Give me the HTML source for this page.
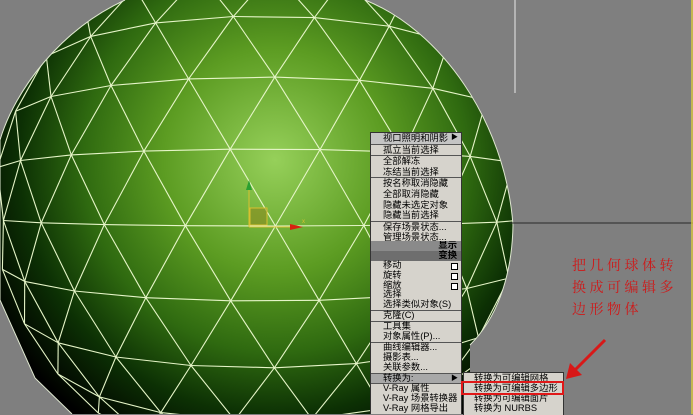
<!DOCTYPE html>
<html><head><meta charset="utf-8"><style>
html,body{margin:0;padding:0;}
body{width:693px;height:414px;overflow:hidden;background:#7f7f7f;position:relative;font-family:"Liberation Sans","Noto Sans CJK SC",sans-serif;}
svg{position:absolute;left:0;top:0;}
.m{position:absolute;background:#d6d3cc;font-size:9.3px;color:#000;overflow:hidden;}
.m div{padding-left:12px;height:10.6px;line-height:10.6px;white-space:nowrap;position:relative;}
.m2 div{height:9.9px;line-height:9.9px;}
.m3 div{height:10px;line-height:10px;padding-left:10px;}
.sep{border-top:1px solid #555;}
.hd{background:#8a8a8a;text-align:right;padding-right:4px;font-weight:bold;}
.hd2{background:#6e6e6e;text-align:right;padding-right:4px;font-weight:bold;color:#000}
.arr{position:absolute;right:3px;top:0;font-size:7px;}
.cb{position:absolute;right:3px;top:2px;width:5px;height:5px;border:1px solid #000;background:#fff;}
.red{position:absolute;left:572px;top:256px;color:#d01818;font-size:14px;line-height:22px;letter-spacing:3.5px;font-family:"Liberation Serif","Noto Serif CJK SC",serif;}
</style></head><body>
<svg width="693" height="414" id="s">
<defs>
<radialGradient id="g" gradientUnits="userSpaceOnUse" cx="275" cy="160" r="320">
<stop offset="0" stop-color="#96d05a"/>
<stop offset="0.35" stop-color="#5c9c22"/>
<stop offset="0.6" stop-color="#2f6a10"/>
<stop offset="0.8" stop-color="#0c3004"/>
<stop offset="1" stop-color="#000"/>
</radialGradient>
<clipPath id="c"><path d="M125,0 C60,30 15,90 0,140 L0,300 L35,378 L72,414 L470,414 L470,345 C495,320 512,280 513,225 C505,120 440,30 365,0 Z"/></clipPath>
</defs>
<path d="M125,0 C60,30 15,90 0,140 L0,300 L35,378 L72,414 L470,414 L470,345 C495,320 512,280 513,225 C505,120 440,30 365,0 Z" fill="url(#g)"/>
<g id="mesh" clip-path="url(#c)" stroke="#e6f5c8" stroke-width="1.1" fill="none"></g>
<path d="M125,0 C60,30 15,90 0,140 L0,300 L35,378 L72,414 M470,345 C495,320 512,280 513,225 C505,120 440,30 365,0" stroke="#dfe8d0" stroke-width="1" fill="none"/>
<line x1="515" y1="0" x2="515" y2="93" stroke="#e8e8e8" stroke-width="1"/>
<line x1="510" y1="223" x2="693" y2="223" stroke="#2a2a2a" stroke-width="1"/>
<line x1="692" y1="0" x2="692" y2="414" stroke="#d8c840" stroke-width="1.5"/>
<rect x="250" y="208" width="17" height="17" fill="#8a8a20" fill-opacity="0.6" stroke="#d8c030" stroke-width="1"/>
<line x1="249" y1="183" x2="249" y2="227" stroke="#d8c030"/>
<line x1="249" y1="227" x2="300" y2="227" stroke="#d8c030"/>
<polygon points="246,190 249,180 252,190" fill="#2aa030"/>
<polygon points="290,224 303,227 290,230" fill="#d82010"/>
<text x="302" y="223" font-size="6" fill="#d8c030">x</text>
<line x1="605" y1="340" x2="573" y2="372" stroke="#d81818" stroke-width="3"/>
<polygon points="566,379 570,363 582,375" fill="#d81818"/>
</svg>
<div class="m" style="left:370px;top:132px;width:90px;height:108px;border:1px solid #333;">
<div style="background:#c4c4c4">视口照明和阴影<span class="arr">▶</span></div>
<div class="sep">孤立当前选择</div>
<div class="sep">全部解冻</div>
<div>冻结当前选择</div>
<div class="sep">按名称取消隐藏</div>
<div>全部取消隐藏</div>
<div>隐藏未选定对象</div>
<div>隐藏当前选择</div>
<div class="sep">保存场景状态...</div>
<div>管理场景状态...</div>
</div>
<div class="m m2" style="left:370px;top:241px;width:90px;height:173px;border-left:1px solid #333;border-right:1px solid #333;">
<div class="hd">显示</div>
<div class="hd2">变换</div>
<div>移动<span class="cb"></span></div>
<div>旋转<span class="cb"></span></div>
<div>缩放<span class="cb"></span></div>
<div>选择</div>
<div>选择类似对象(S)</div>
<div class="sep">克隆(C)</div>
<div class="sep">工具集</div>
<div>对象属性(P)...</div>
<div class="sep">曲线编辑器...</div>
<div>摄影表...</div>
<div>关联参数...</div>
<div class="sep" style="background:#a8a8a8">转换为:<span class="arr">▶</span></div>
<div class="sep">V-Ray 属性</div>
<div>V-Ray 场景转换器</div>
<div>V-Ray 网格导出</div>
</div>
<div class="m m3" style="left:463px;top:372px;width:99px;height:42px;border:1px solid #333;border-bottom:none;">
<div>转换为可编辑网格</div>
<div>转换为可编辑多边形</div>
<div>转换为可编辑面片</div>
<div>转换为 NURBS</div>
</div>
<div style="position:absolute;left:461px;top:381px;width:99px;height:10px;border:2px solid #e01818;"></div>
<div class="red">把几何球体转<br>换成可编辑多<br>边形物体</div>
<script>
(function(){
var g=document.getElementById('mesh');var cx=262,cy=205,R=268,s=0.34;
function proj(i,j){var x=(i+j*0.5)*s+0.05,y=j*s*0.866+0.08;var th=Math.hypot(x,y);if(th>1.65)return null;var k=th<1e-6?0:Math.sin(Math.min(th,1.5708))/th;return [cx+R*x*k,cy+R*0.98*y*k];}
var out='';
for(var j=-8;j<=8;j++)for(var i=-12;i<=12;i++){var a=proj(i,j);if(!a)continue;
[[1,0],[0,1],[-1,1]].forEach(function(d){var b=proj(i+d[0],j+d[1]);if(b)out+='<line x1="'+a[0].toFixed(1)+'" y1="'+a[1].toFixed(1)+'" x2="'+b[0].toFixed(1)+'" y2="'+b[1].toFixed(1)+'"/>';});}
g.innerHTML=out;
})();
</script>
</body></html>
